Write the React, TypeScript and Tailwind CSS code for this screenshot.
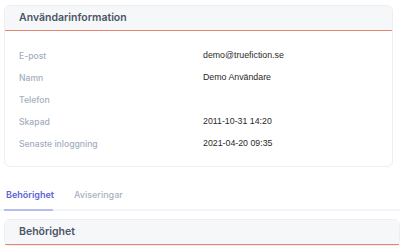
import React from 'react';

const rows: { label: string; value: string }[] = [
  { label: 'E-post', value: 'demo@truefiction.se' },
  { label: 'Namn', value: 'Demo Användare' },
  { label: 'Telefon', value: '' },
  { label: 'Skapad', value: '2011-10-31 14:20' },
  { label: 'Senaste inloggning', value: '2021-04-20 09:35' },
];

const CardHeader = ({ title }: { title: string }) => (
  <div className="h-[25px] bg-[#f6f7f9] border-b border-[#e8836f] flex items-center px-[14px] rounded-t-[5px]">
    <h2 className="text-[10.5px] font-semibold text-[#4a5568] leading-none">{title}</h2>
  </div>
);

export default function App() {
  return (
    <div className="w-[400px] h-[249px] bg-white overflow-hidden font-['Inter',sans-serif]">
      <div className="pt-[5px] pl-[4px] pr-[7px]">
        <section className="border border-[#eceef2] rounded-[6px] bg-white">
          <CardHeader title="Användarinformation" />
          <dl className="pt-[20px] pb-[17px] px-[14px] flex flex-col gap-[12px]">
            {rows.map((r) => (
              <div key={r.label} className="flex h-[10px] items-center">
                <dt className="w-[184px] text-[8.6px] font-medium text-[#a3aec0]">{r.label}</dt>
                <dd className="text-[8.8px] text-[#2a2a2a] font-['Liberation_Sans',sans-serif]">{r.value}</dd>
              </div>
            ))}
          </dl>
        </section>
      </div>

      <nav className="mt-[17px] pl-[4px] flex border-b-[2px] border-[#f3f5f9] h-[27px]">
        <button className="w-[49px] -mb-[2px] border-b-[2px] border-[#b7bdf3] text-[9px] font-semibold text-[#5b63d3] text-left pl-[2px] pb-[4px]">
          Behörighet
        </button>
        <button className="ml-[21px] text-[9px] font-medium text-[#a8b0bf] pb-[4px]">Aviseringar</button>
      </nav>

      <div className="pt-[8px] pl-[4px]">
        <section className="border border-[#eceef2] rounded-[6px] bg-white">
          <CardHeader title="Behörighet" />
        </section>
      </div>
    </div>
  );
}
